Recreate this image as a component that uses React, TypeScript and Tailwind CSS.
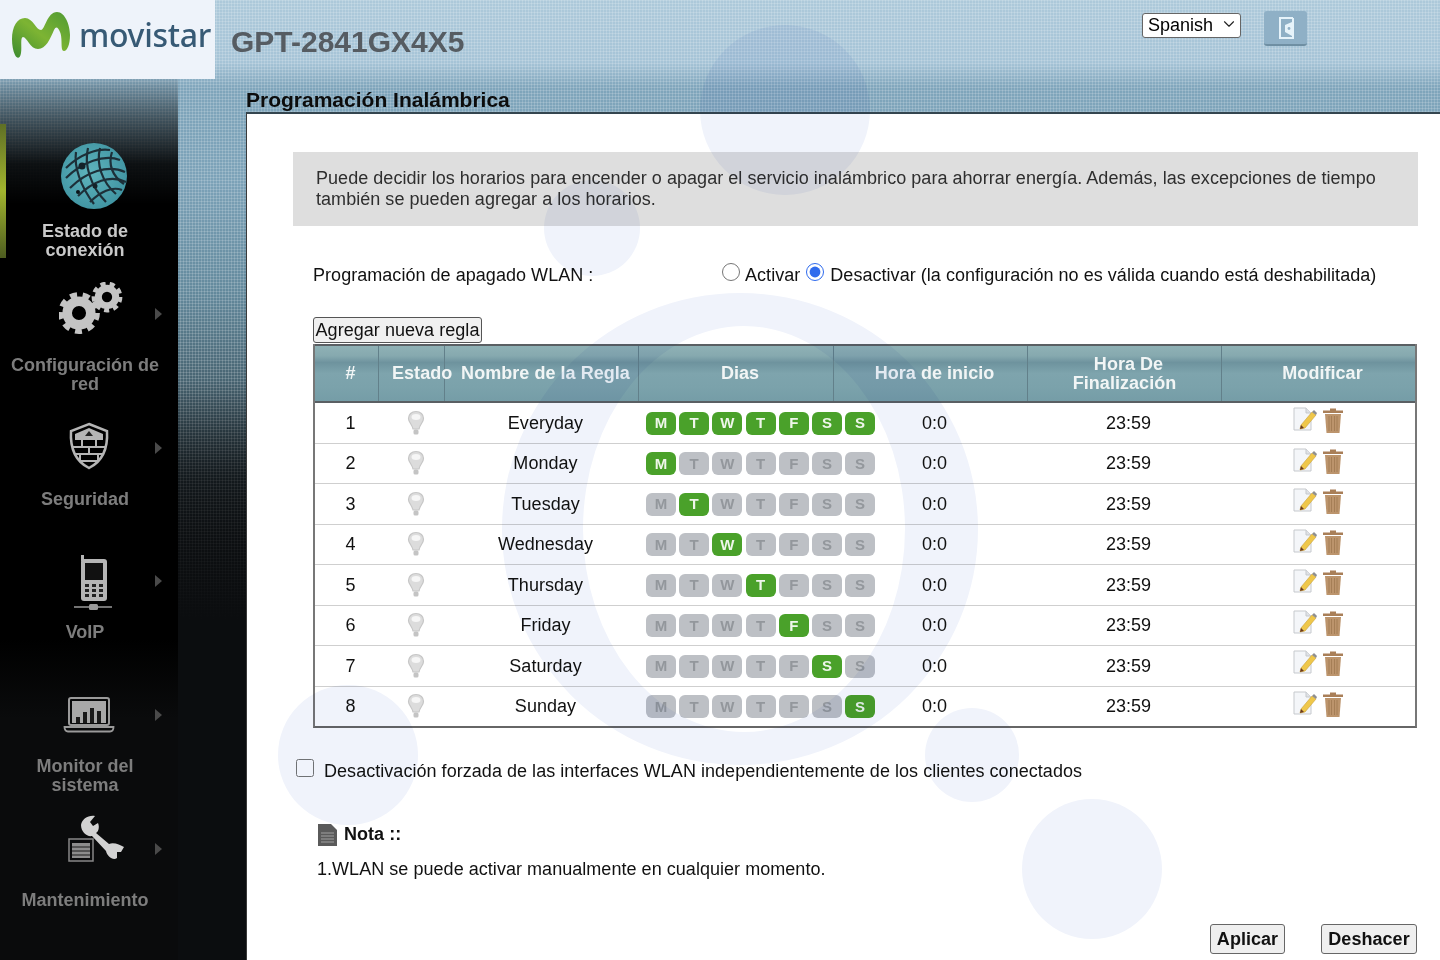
import { ChevronDown } from "lucide-react";

const days = ["M", "T", "W", "T", "F", "S", "S"];

const rules = ["Everyday", "Monday", "Tuesday", "Wednesday", "Thursday", "Friday", "Saturday", "Sunday"];

function Globe() {
  return (
    <svg width="68" height="68" viewBox="0 0 68 68" fill="none">
      <defs>
        <radialGradient id="globe-fill" cx="0.45" cy="0.45" r="0.6">
          <stop offset="0" stopColor="#5fb4bd" />
          <stop offset="1" stopColor="#3f93a1" />
        </radialGradient>
      </defs>
      <circle cx="34" cy="34" r="33" fill="url(#globe-fill)" />
      <g stroke="#1d2f38" strokeWidth="2.2">
        <path d="M6 26C20 12 38 6 50 8" />
        <path d="M6 36C22 20 44 12 60 18" />
        <path d="M10 46C26 30 48 22 65 30" />
        <path d="M18 54C32 40 50 32 66 40" />
        <path d="M30 60C40 50 52 44 62 48" />
        <path d="M16 10C14 24 20 44 34 62" />
        <path d="M28 6C24 22 30 44 46 60" />
        <path d="M40 6C36 22 42 40 56 52" />
        <path d="M52 10C48 22 52 34 64 42" />
      </g>
      <circle cx="22" cy="24" r="3.5" fill="#142229" />
      <circle cx="35" cy="44" r="2.5" fill="#142229" />
      <circle cx="18" cy="50" r="2" fill="#0c1418" />
    </svg>
  );
}

function Gear({ cx, cy, r, teeth }: { cx: number; cy: number; r: number; teeth: number }) {
  const rt = r * 0.92;
  const step = (2 * Math.PI * rt) / teeth;
  return (
    <g fill="none" stroke="#c4c4c4">
      <circle cx={cx} cy={cy} r={r * 0.62} strokeWidth={r * 0.5} />
      <circle cx={cx} cy={cy} r={rt} strokeWidth={r * 0.36} strokeDasharray={`${step * 0.55} ${step * 0.45}`} />
    </g>
  );
}

function Gears() {
  return (
    <svg width="64" height="52" viewBox="0 0 64 52">
      <Gear cx={20} cy={31} r={19} teeth={9} />
      <Gear cx={48} cy={15} r={14} teeth={9} />
    </svg>
  );
}

function Shield() {
  return (
    <svg width="42" height="48" viewBox="0 0 42 48" fill="none">
      <path d="M21 2 L39 9 C40 26 35 39 21 46 C7 39 2 26 3 9Z" stroke="#b5b5b5" strokeWidth="2.5" />
      <path d="M7 12 L21 6 L35 12 L35 18 L7 18Z" fill="#b5b5b5" />
      <path d="M21 9 l4 5 h-8z" fill="#222" />
      <g stroke="#b5b5b5" strokeWidth="2">
        <path d="M5 25H37M7 32H35M11 39H31" />
        <path d="M14 18V25M28 18V25M21 25V32M12 32V39M30 32V39" />
      </g>
    </svg>
  );
}

function Phone() {
  return (
    <svg width="40" height="56" viewBox="0 0 40 56" fill="none">
      <rect x="8" y="4" width="26" height="42" rx="3" fill="#b5b5b5" />
      <rect x="8" y="0" width="3" height="6" fill="#b5b5b5" />
      <rect x="12" y="8" width="18" height="17" fill="#111" />
      <g fill="#222">
        <rect x="12" y="29" width="4" height="3" />
        <rect x="19" y="29" width="4" height="3" />
        <rect x="26" y="29" width="4" height="3" />
        <rect x="12" y="34" width="4" height="3" />
        <rect x="19" y="34" width="4" height="3" />
        <rect x="26" y="34" width="4" height="3" />
        <rect x="12" y="39" width="4" height="3" />
        <rect x="19" y="39" width="4" height="3" />
        <rect x="26" y="39" width="4" height="3" />
      </g>
      <path d="M1 52H39" stroke="#9a9a9a" strokeWidth="1.5" />
      <rect x="16" y="49" width="9" height="6" rx="1.5" fill="#9a9a9a" />
    </svg>
  );
}

function Laptop() {
  return (
    <svg width="52" height="36" viewBox="0 0 52 36" fill="none">
      <rect x="6" y="1" width="40" height="27" rx="2" stroke="#9a9a9a" strokeWidth="2" />
      <rect x="9" y="4" width="34" height="22" fill="#a8a8a8" />
      <g fill="#1a1a1a">
        <rect x="13" y="20" width="4" height="6" />
        <rect x="20" y="15" width="4" height="11" />
        <rect x="27" y="11" width="4" height="15" />
        <rect x="34" y="14" width="4" height="12" />
      </g>
      <path d="M1.5 30H50.5C50.5 33 49 34.5 47 34.5H5C3 34.5 1.5 33 1.5 30Z" stroke="#9a9a9a" strokeWidth="1.8" />
    </svg>
  );
}

function Wrench() {
  return (
    <svg width="58" height="50" viewBox="0 0 58 50" fill="none">
      <rect x="2" y="24" width="24" height="22" stroke="#888" strokeWidth="1.5" />
      <rect x="5" y="28" width="18" height="15" fill="#8c8c8c" />
      <path d="M5 32H23M5 36H23M5 40H23" stroke="#1a1a1a" strokeWidth="1" />
      <path
        d="M14 10 C15 4 21 0 28 1 L23 7 L26 11 L31 8 C33 13 31 17 29 18 L42 29 C47 27 53 30 57 32 L54 37 L50 37 L50 43 C46 46 40 41 39 36 L25 21 C20 22 14 17 14 10Z"
        fill="#d2d2d2"
      />
    </svg>
  );
}

function NavItem({ label, color, iconClass, arrow, icon }: { label: string; color: string; iconClass: string; arrow: boolean; icon: React.ReactNode }) {
  return (
    <div className="relative h-[133.8px] w-[178px] text-center">
      <div className={`flex h-[98px] justify-center ${iconClass}`}>{icon}</div>
      <div className={`w-[170px] text-[18px] font-bold leading-[19px] ${color}`}>{label}</div>
      {arrow && <div className="absolute left-[155px] top-[50px] h-0 w-0 border-y-[6px] border-l-[7px] border-y-transparent border-l-[#4a4a4a]" />}
    </div>
  );
}

function Bulb() {
  return (
    <svg width="18" height="26" viewBox="0 0 18 26" fill="none">
      <path d="M9 1.5C4.5 1.5 1.5 4.5 1.5 8.5C1.5 12 5 14 6 19H12C13 14 16.5 12 16.5 8.5C16.5 4.5 13.5 1.5 9 1.5Z" fill="#dcdcdc" stroke="#c6c6c6" strokeWidth="1.2" />
      <ellipse cx="9" cy="7" rx="4.5" ry="3" fill="#f6f6f6" />
      <rect x="6.5" y="19.5" width="5" height="5" rx="1.5" fill="#c4c4c4" />
    </svg>
  );
}

function EditIcon() {
  return (
    <svg width="24" height="24" viewBox="0 0 24 24" fill="none">
      <path d="M1 1H13L18 6V23H1Z" fill="#f4f6f9" stroke="#c6c9cd" strokeWidth="1" />
      <path d="M13 1V6H18" fill="#dfe2e6" stroke="#c6c9cd" strokeWidth="1" />
      <path d="M8 18L19 5L23 8L12 21L7 22Z" fill="#efc74a" stroke="#c9a13a" strokeWidth="0.6" />
      <path d="M19 5L21 3L24 6L23 8Z" fill="#8f8f8f" />
      <path d="M8 18L7 22L11 21Z" fill="#6a3a22" />
    </svg>
  );
}

function TrashIcon() {
  return (
    <svg width="22" height="27" viewBox="0 0 22 27" fill="none">
      <path d="M8 1.5H14V3.5H21V6H1V3.5H8Z" fill="#a97f58" />
      <path d="M3 7H19L17.5 26H4.5Z" fill="#bc946c" />
      <path d="M7 9V24M9.5 9V24M12.5 9V24M15 9V24" stroke="#a07850" strokeWidth="0.8" />
    </svg>
  );
}

function DayChip({ day, on }: { day: string; on: boolean }) {
  return (
    <div
      className={`flex h-[23px] w-[30px] shrink-0 items-center justify-center rounded-[6px] text-[15px] font-bold ${
        on ? "bg-[#4aa12a] text-[#eef6ea]" : "bg-[#bdc0c5] text-[#93979c]"
      }`}
    >
      {day}
    </div>
  );
}

const gridCols = "grid grid-cols-[64px_66px_194px_195px_194px_194px_1fr]";

export default function App() {
  return (
    <div className="relative flex h-[960px] w-full flex-col overflow-hidden bg-[linear-gradient(rgba(255,255,255,0.16)_1px,transparent_1px),linear-gradient(90deg,rgba(255,255,255,0.16)_1px,transparent_1px),linear-gradient(180deg,#adc9da_0px,#a6c4d7_62px,#7fa5bb_88px,#7ca2b8_180px,#648a9d_290px,#3f5864_410px,#1f2b31_480px,#12171a_540px,#0b0d0f_640px,#0a0b0c_960px)] bg-[length:3px_3px,3px_3px,100%_100%] [font-family:'Liberation_Sans',sans-serif] text-[18px] text-[#111]">
      {/* header */}
      <div className="flex h-[79px] shrink-0 items-start">
        <div className="flex h-[79px] w-[215px] shrink-0 items-start bg-[#eef3fa] pl-[10px] pt-[9px]">
          <svg className="shrink-0" width="62" height="54" viewBox="10 10 62 54" fill="none">
            <defs>
              <linearGradient id="m-fill" x1="0" y1="1" x2="1" y2="0">
                <stop offset="0" stopColor="#3b8a2f" />
                <stop offset="0.5" stopColor="#7db433" />
                <stop offset="1" stopColor="#4f9a33" />
              </linearGradient>
            </defs>
            <path
              d="M12 40C12 28 17 19 25 19C33 19 36 31 41 31C45 31 47 13 57 13C65 13 70 26 70 36C70 46 67 52 64 52C60 52 63 40 60 33C58 28 56 27 54 31C50 40 46 50 38 50C30 50 27 38 23 38C20 38 22 48 21 54C20 60 17 60 15 56C13 52 12 46 12 40Z"
              fill="url(#m-fill)"
            />
          </svg>
          <span className="ml-[7px] mt-[6px] [font-family:'Noto_Sans',sans-serif] text-[32px] font-medium leading-[40px] tracking-[-0.3px] text-[#375a75]">movistar</span>
        </div>
        <div className="ml-[16px] mt-[21px] text-[30px] font-bold leading-[42px] text-[#565c62]">GPT-2841GX4X5</div>
        <div className="relative ml-auto mt-[12px] h-[25px] w-[99px]">
          <select defaultValue="Spanish" className="h-full w-full appearance-none rounded-[3px] border border-[#666] bg-white pl-[5px] text-[18px] leading-[22px] text-black">
            <option>Spanish</option>
          </select>
          <ChevronDown className="pointer-events-none absolute right-[3px] top-[3px] h-[18px] w-[18px] text-[#222]" strokeWidth={1.5} />
        </div>
        <div className="ml-[23px] mr-[133px] mt-[11px] flex h-[35px] w-[43px] items-center justify-center rounded-[3px] border-b-2 border-b-[#6f8fa3] bg-[#8fb0c6]">
          <svg width="18" height="24" viewBox="0 0 18 24" fill="none">
            <path d="M16 2H3V22H16V2" stroke="#e6f3fa" strokeWidth="2" />
            <path d="M15 6L8 9V16L15 20Z" fill="#e6f3fa" />
            <circle cx="12" cy="12.5" r="1.4" fill="#8fb0c6" />
          </svg>
        </div>
      </div>

      <div className="flex min-h-0 flex-1">
        {/* sidebar */}
        <div className="relative w-[178px] shrink-0 bg-[linear-gradient(180deg,rgba(0,0,0,0.08)_0px,rgba(0,0,0,0.5)_40px,rgba(0,0,0,0.9)_85px,#000_125px,#000_560px,rgba(10,11,12,1)_640px)] pt-[45px]">
          <div className="absolute left-0 top-[45px] h-[134px] w-[6px] bg-[linear-gradient(180deg,#5f6f25,#a2b52e_50%,#4d5c20)]" />
          <NavItem label="Estado de conexión" color="text-[#c9c9c9] px-[26px]" iconClass="pl-[10px] pt-[18px]" arrow={false} icon={<Globe />} />
          <NavItem label="Configuración de red" color="text-[#7d7d7d]" iconClass="pl-[4px] pt-[24px]" arrow icon={<Gears />} />
          <NavItem label="Seguridad" color="text-[#7d7d7d]" iconClass="pt-[30px]" arrow icon={<Shield />} />
          <NavItem label="VoIP" color="text-[#7d7d7d]" iconClass="pl-[8px] pt-[30px]" arrow icon={<Phone />} />
          <NavItem label="Monitor del sistema" color="text-[#7d7d7d] px-[26px]" iconClass="pt-[38px]" arrow icon={<Laptop />} />
          <NavItem label="Mantenimiento" color="text-[#7d7d7d]" iconClass="pl-[14px] pt-[22px]" arrow icon={<Wrench />} />
        </div>
        <div className="w-[68px] shrink-0 bg-[linear-gradient(180deg,transparent_0px,transparent_300px,rgba(11,13,15,0.6)_400px,#0b0d0f_540px)]" />

        {/* main */}
        <div className="flex min-w-0 flex-1 flex-col">
          <div className="flex h-[33px] shrink-0 items-end text-[21px] font-bold leading-[24px] text-[#0c0c0c]">Programación Inalámbrica</div>
          <div className="flex-1 border-l border-t-2 border-l-[#3a3a3a] border-t-[#34454f] bg-white tracking-[0.04px]">
            <div className="ml-[46px] mr-[22px] mt-[38px] h-[74px] bg-[#dedede] pl-[23px] pt-[16px] leading-[21px] text-[#2e2e2e]">
              Puede decidir los horarios para encender o apagar el servicio inalámbrico para ahorrar energía. Además, las excepciones de tiempo también se pueden agregar a los horarios.
            </div>

            <div className="ml-[66px] mt-[36px] flex h-[26px] items-center whitespace-nowrap">
              <span className="w-[409px]">Programación de apagado WLAN :</span>
              <input type="radio" name="wlan" className="-mt-[7px] mb-0 h-[18px] w-[18px]" />
              <span className="ml-[5px]">Activar</span>
              <input type="radio" name="wlan" defaultChecked className="-mt-[7px] ml-[6px] h-[18px] w-[18px] accent-[#2f6bed]" />
              <span className="ml-[6px]">Desactivar (la configuración no es válida cuando está deshabilitada)</span>
            </div>

            <button className="ml-[66px] mt-[29px] block h-[26px] w-[169px] rounded-[3px] border border-[#555] bg-[#f0f0f0] text-[18px] leading-[22px] text-[#111]">Agregar nueva regla</button>

            <div className="ml-[66px] mr-[23px] mt-[1px] border-x-2 border-b-2 border-x-[#777] border-b-[#666]">
              <div className={`${gridCols} h-[59px] border-y-2 border-y-[#5a5f63] bg-[linear-gradient(180deg,#8fb1b5_0%,#86a9af_18%,#6e939e_30%,#7ea4ad_50%,#7ba2ab_75%,#759da7_100%)] font-bold leading-[19px] text-[#f1f5f5]`}>
                <div className="flex items-center justify-center border-r border-r-[#62808a] pl-2">#</div>
                <div className="flex items-center whitespace-nowrap border-r border-r-[#62808a] pl-[13px]">Estado</div>
                <div className="flex items-center justify-center whitespace-nowrap border-r border-r-[#62808a] pl-2">Nombre de la Regla</div>
                <div className="flex items-center justify-center border-r border-r-[#62808a] pl-2">Dias</div>
                <div className="flex items-center justify-center border-r border-r-[#62808a] pl-2">Hora de inicio</div>
                <div className="flex flex-col items-center justify-center border-r border-r-[#62808a] pl-2 text-center">
                  <span>Hora De</span>
                  <span className="pr-2">Finalización</span>
                </div>
                <div className="flex items-center justify-center pl-2">Modificar</div>
              </div>
              {rules.map((rule, i) => (
                <div key={i} className={`${gridCols} h-[40.5px] items-center border-b border-b-[#cfcfcf] pt-[1px] last:h-[39.5px] last:border-b-0`}>
                  <div className="pl-[7px] text-center">{i + 1}</div>
                  <div className="-mt-[1px] flex justify-center pl-[7px]">
                    <Bulb />
                  </div>
                  <div className="pl-[7px] text-center">{rule}</div>
                  <div className="flex gap-[3.2px] pl-[7px]">
                    {days.map((d, j) => (
                      <DayChip key={j} day={d} on={i === 0 || i - 1 === j} />
                    ))}
                  </div>
                  <div className="pl-[7px] text-center">0:0</div>
                  <div className="pl-[7px] text-center">23:59</div>
                  <div className="-mt-[5px] flex justify-center gap-[5px] pr-[1px]">
                    <EditIcon />
                    <TrashIcon />
                  </div>
                </div>
              ))}
            </div>

            <div className="ml-[49px] mt-[31px] flex h-[24px] items-center">
              <input type="checkbox" className="-mt-[6px] h-[18px] w-[18px]" />
              <span className="ml-[10px]">Desactivación forzada de las interfaces WLAN independientemente de los clientes conectados</span>
            </div>

            <div className="ml-[71px] mt-[39px] flex h-[24px] items-center">
              <svg width="19" height="24" viewBox="0 0 19 24">
                <path d="M0 2H13L19 8V24H0Z" fill="#5a5a5a" />
                <path d="M3 11H16M3 14H16M3 17H16M3 20H16" stroke="#a0a0a0" strokeWidth="1" />
              </svg>
              <span className="ml-[7px] font-bold">Nota ::</span>
            </div>
            <div className="ml-[70px] mt-[11px] h-[24px] leading-[24px]">1.WLAN se puede activar manualmente en cualquier momento.</div>

            <div className="mr-[23px] mt-[43px] flex justify-end gap-[36px]">
              <button className="h-[30px] w-[75px] rounded-[3px] border border-[#666] bg-[#efefef] text-[18px] font-bold leading-[24px] text-[#111]">Aplicar</button>
              <button className="h-[30px] w-[96px] rounded-[3px] border border-[#666] bg-[#efefef] text-[18px] font-bold leading-[24px] text-[#111]">Deshacer</button>
            </div>
          </div>
        </div>
      </div>

      {/* watermark circles, multiplied over the whole page */}
      <svg className="pointer-events-none absolute left-0 top-0 mix-blend-multiply" width="1440" height="960" viewBox="0 0 1440 960">
        <g fill="#f0f3fb">
          <circle cx="785" cy="110" r="85" />
          <circle cx="592" cy="228" r="48" />
          <circle cx="348" cy="755" r="70" />
          <circle cx="972" cy="755" r="47" />
          <circle cx="1092" cy="869" r="70" />
          <path fillRule="evenodd" d="M502 529a238 236 0 1 0 476 0a238 236 0 1 0 -476 0ZM583 529a161 203 0 1 0 322 0a161 203 0 1 0 -322 0Z" />
        </g>
      </svg>
    </div>
  );
}
